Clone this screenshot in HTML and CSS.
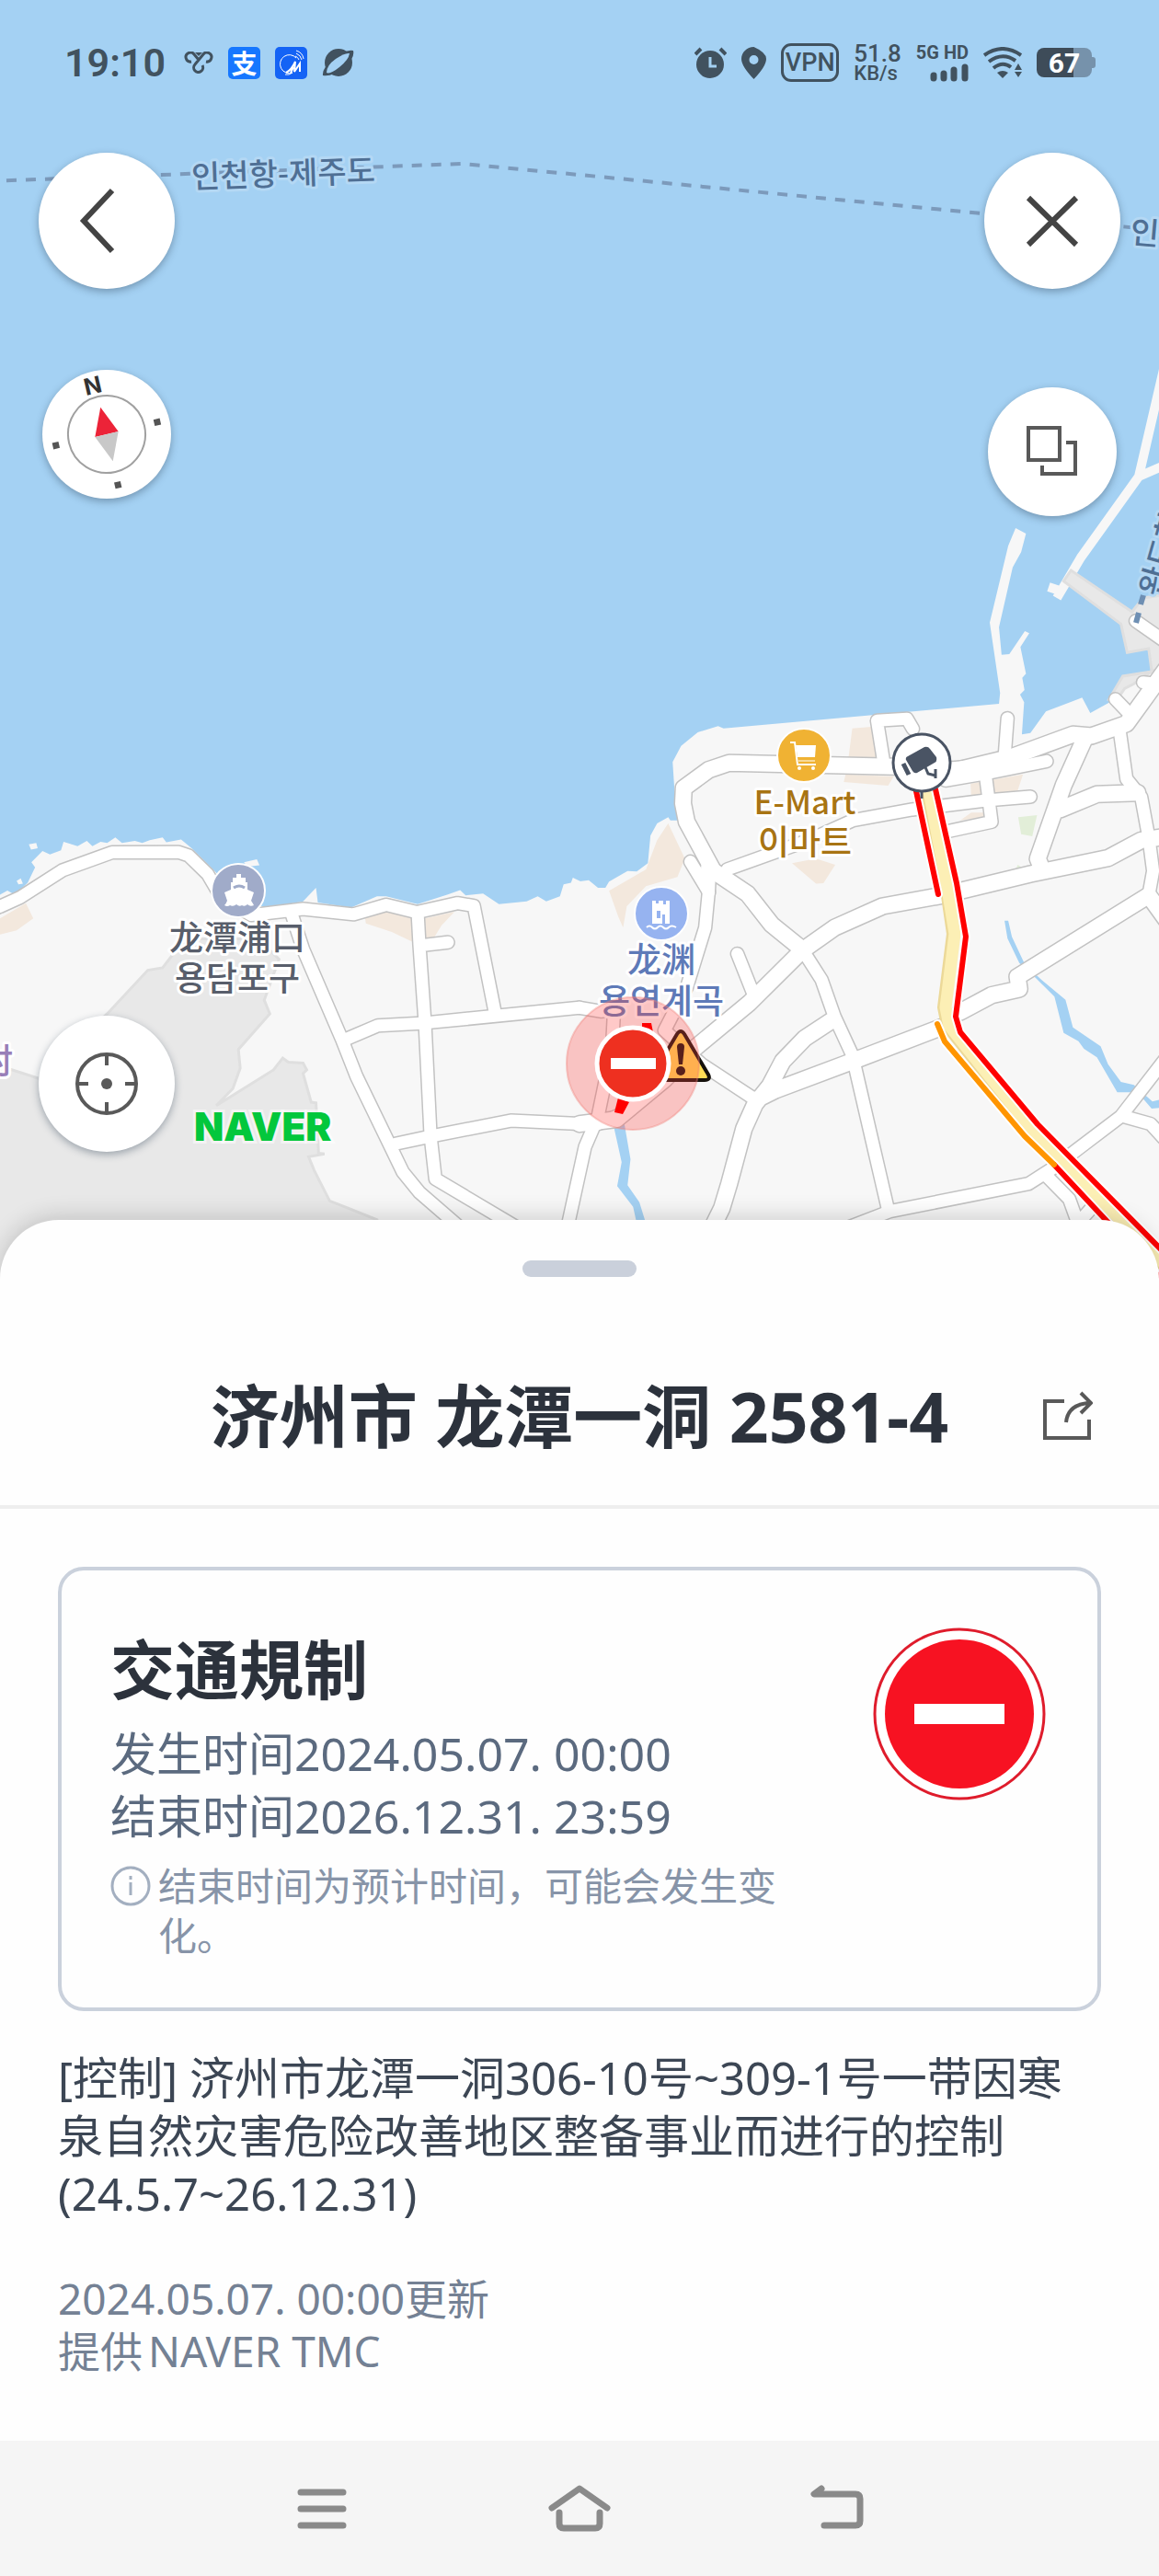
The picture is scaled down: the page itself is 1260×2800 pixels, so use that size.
FILE: index.html
```html
<!DOCTYPE html>
<html lang="zh-CN">
<head>
<meta charset="utf-8">
<meta name="viewport" content="width=device-width, initial-scale=1">
<title>济州市 龙潭一洞 2581-4</title>
<link rel="stylesheet" href="styles.css">
</head>
<body>
<main class="map">
  <svg class="map-canvas" viewBox="0 0 1260 1390" preserveAspectRatio="xMidYMin slice" aria-hidden="true">
    <defs>
      <g id="roads">
        <g transform="translate(0 780) scale(.4018 .37)">
          <path class="road" d="M-20 563L0 555L55 528L170 448L303 396L482 395L510 405L562 460L600 530L680 580L820 562L957 578L1045 550L1128 572L1238 545L1282 553L1340 870"/>
          <path class="road" d="M790 580L820 680L925 945L965 1055L1090 1335L1135 1395L1300 1550"/>
          <path class="road" d="M1130 572L1135 670L1150 900L1165 1230L1178 1355L1480 1550M1135 670L1212 660"/>
          <path class="road" d="M935 945L1022 905L1150 897L1568 852M1070 1252L1165 1230L1382 1184L1568 1193"/>
        </g>
        <g transform="translate(630 540) scale(.4018 .3333)">
          <path class="road wide" d="M1110 880L1010 890L850 880L405 868L350 890L282 950L280 1000L290 1060L360 1215"/>
          <path class="road wide" d="M1600 540L1480 740L1385 780L1335 775L1165 850L1010 895"/>
          <path class="road" d="M1264 862L1110 900L990 925M1505 405L1600 485M1525 605L1560 610M1450 660L1490 710"/>
          <path class="road wide" d="M1370 780L1310 940L1240 1180L1250 1210M1300 1020L1400 970L1510 965"/>
          <path class="road" d="M1158 722L1150 850M902 757L886 724L805 730L825 880"/>
          <path class="road" d="M1220 978L1100 990L900 1020L740 1055L620 1120L400 1215M1100 920L1115 1060L1000 1090M300 1190L350 1290"/>
          <path class="road" d="M1460 750L1480 920L1520 980L1540 1110L1552 1220L1540 1300"/>
        </g>
        <g transform="translate(630 940) scale(.4018 .3333)">
          <path class="road wide" d="M350 10L455 95L520 195L602 275"/>
          <path class="road" d="M602 275L655 375L690 495L738 620L835 1125"/>
          <path class="road" d="M352 30L350 80L340 205L290 400L230 540L330 650L475 765"/>
          <path class="road wide" d="M1600 -95L1520 -80L1430 -22L1220 30L980 100L820 135L690 205L602 280L460 450L310 600L230 700L100 830L0 845"/>
          <path class="road" d="M427 290L470 420M95 440L88 600L50 820M0 466L60 478"/>
          <path class="road wide" d="M1000 520L740 640L530 735L480 765M680 510L610 565L550 640L515 720L475 780L445 860L405 1040L385 1120L340 1230"/>
          <path class="road wide" d="M1030 480L1115 425L1190 405L1185 365L1540 100L1600 200"/>
          <path class="road" d="M700 1195L840 1130L1215 1040L1280 990L1345 930L1465 820L1600 610M1470 820L1545 845L1610 930M1260 1010L1325 1090L1370 1240M1400 1100L1340 1180M100 820L40 850L15 920L-45 1250"/>
        </g>
      </g>
      <g id="traffic">
        <path d="M996 860L1018 960L1020 974"/>
        <path class="jam" d="M1017 858L1040 960L1050 1018L1039 1105L1044 1122L1128 1222L1270 1366"/>
        <path class="jam" d="M996 860L1020 972M1146 1266L1260 1388"/>
        <path class="slow" d="M1019 1113L1027 1132L1114 1235L1146 1266"/>
      </g>
    </defs>

    <rect class="sea" x="-1000" width="3260" height="1390"/>
    <path class="ferry-route" d="M-14 197L502 178L630 190L1068 232L1260 250"/>
    <path class="pier" d="M1270 380L1238 518L1175 606L1149 650M1238 518L1270 504M1140 638L1152 642"/>

    <g class="land" transform="translate(0 780) scale(.4018 .37)">
      <path d="M0 520L20 508L40 520L75 485L95 440L85 425L115 392L135 402L165 390L172 365L210 378L235 362L250 378L272 365L290 368L312 352L330 368L365 362L385 368L405 360L440 352L450 366L490 358L520 385L580 450L640 520L720 560L820 540L855 500L860 543L950 558L1020 525L1045 525L1130 548L1210 520L1245 507L1260 522L1307 517L1350 548L1425 540L1455 525L1478 540L1515 525L1525 490L1545 485L1550 470L1572 482V1660H0ZM78 372L98 368L102 384L84 388ZM45 480L56 472L62 488L50 490ZM660 425L695 416L702 434L670 438Z"/>
    </g>
    <g class="land" transform="translate(630 540) scale(.4018 .3333)">
      <path d="M-4 1255L25 1250L50 1275L70 1275L80 1255L130 1220L155 1222L185 1195L192 1105L210 1065L240 1045L246 1055L270 1055L258 975L252 865L275 812L320 768L375 748L390 755L1135 675L1138 640L1110 410L1160 160L1180 102L1208 120L1195 180L1172 230L1135 425L1142 515L1163 513L1205 438L1217 445L1193 490L1208 577L1198 590L1204 630L1192 645L1203 670L1197 775L1220 770L1262 700L1360 655L1382 705L1435 670L1470 585L1548 567L1540 495L1482 508L1465 415L1310 275L1330 240L1498 378L1525 330L1580 318V2560H-4Z"/>
    </g>
    <g class="port" transform="translate(630 540) scale(.4018 .3333)">
      <path d="M1310 275L1330 240L1495 375L1525 330L1580 320V560L1548 567L1540 495L1482 508L1465 415ZM1433 660L1470 585L1548 570L1500 610L1475 625L1455 660Z"/>
    </g>
    <g class="port" transform="translate(0 780) scale(.4018 .37)">
      <path d="M-10 1020L105 1060L290 870L400 742L440 735L500 650L700 650L755 710L715 830L730 870L645 975L650 1030L630 1090L585 1140L740 1035L765 1000L780 1012L820 1015L830 1035L820 1045L842 1130L855 1132L862 1280L878 1282L835 1290L850 1330L892 1420L940 1440L1020 1475V1660H-10Z"/>
    </g>
    <g class="sand" transform="translate(0 780) scale(.4018 .37)">
      <path d="M0 590L70 545L90 590L45 625L0 637ZM988 590L1045 570L1115 590V658L1060 630L990 605ZM1150 590L1230 570L1195 610L1175 645L1150 648Z"/>
    </g>
    <g class="sand" transform="translate(630 540) scale(.4018 .3333)">
      <path d="M738 755L790 750L805 850H728ZM720 905L850 912L835 942L715 930ZM1058 935L1200 905L1185 960L1060 985ZM1030 1055L1060 1030H1100L1095 1045ZM240 1065L285 1180L265 1240L180 1270L128 1335L118 1405L105 1370L80 1285L180 1215L210 1120ZM575 1195L640 1180L692 1200L660 1260L640 1262Z"/>
      <path class="park" d="M1187 1045L1238 1038L1225 1107L1195 1100ZM1180 1215L1186 1200L1200 1212Z"/>
    </g>
    <g class="river" transform="translate(630 940) scale(.4018 .3333)">
      <path d="M1150 182H1160L1170 235L1205 325L1250 375L1315 440L1335 530L1410 592L1430 650L1465 708L1500 718L1550 772L1590 760V790L1548 795L1510 742L1455 742L1400 628L1365 600L1350 575L1310 548L1285 430L1235 370L1190 320L1158 240ZM92 850L120 835L138 960L130 1045L162 1100L180 1170H155L145 1115L102 1048L114 970Z"/>
    </g>

    <use href="#roads" class="road-edge"/>
    <use href="#roads" class="road-face"/>

    <path class="trunk-edge" d="M1008 860L1028 960L1036 1015L1026 1095L1030 1115L1124 1233L1270 1380"/>
    <path class="trunk" d="M1010 860L1029 960L1038 1015L1028 1095L1032 1115L1126 1233L1272 1380"/>
    <use href="#traffic" class="traffic-edge"/>
    <use href="#traffic" class="traffic-face"/>
    <path class="ferry-stub" d="M1235 677L1238 666M1240 657L1243 647"/>

    <g class="label route" font-size="34">
      <text x="308" y="201" text-anchor="middle" transform="rotate(-2 308 189)">인천항-제주도</text>
      <text x="1228" y="264" transform="rotate(5 1228 264)">인천항</text>
      <text x="1262" y="650" transform="rotate(-74 1262 650)">완도항</text>
    </g>
    <g class="label harbor" font-size="37" text-anchor="middle">
      <text x="258" y="1033">龙潭浦口</text>
      <text class="ko" x="258" y="1077">용담포구</text>
    </g>
    <g class="label shop" font-size="37" text-anchor="middle">
      <text class="latin" x="875" y="885">E-Mart</text>
      <text class="ko" x="875" y="929">이마트</text>
    </g>
    <g class="label sight" font-size="37" text-anchor="middle">
      <text x="719" y="1057">龙渊</text>
      <text class="ko" x="719" y="1102">용연계곡</text>
    </g>
    <text class="label village" font-size="37" text-anchor="end" x="14" y="1167">村</text>

    <g class="poi">
      <circle cx="259" cy="968" r="29" fill="#a0abc9"/>
      <path d="M257 950h5v4h5v5h2v8l7 3-3 9q2 3 3 5-4 2-7-1-3 3-6 1-3 2-6-1-4 3-7 1-3 2-6 0 2-2 3-5l-3-9 7-3v-8h2v-5h4z" fill="#fff"/>
      <path d="M254 965q6-4 12 0" fill="none" stroke="#a0abc9" stroke-width="3"/>
      <circle cx="874" cy="821" r="29" fill="#f0b233"/>
      <path d="M865 810h22l-1 13h-19z" fill="#fff"/>
      <path d="M859 807h5l3 24h20" fill="none" stroke="#fff" stroke-width="2"/>
      <path d="M867 827h19" stroke="#f7d998" stroke-width="2"/>
      <circle cx="869" cy="835" r="2" fill="#fff"/><circle cx="884" cy="835" r="2" fill="#fff"/>
      <circle cx="719" cy="993" r="29" fill="#96b3f0"/>
      <path fill-rule="evenodd" d="M709 979h4v3h3v-3h5v4h3v-4h4v25h-5v-10h-3v10h-11zM714 990h4v8h-4z" fill="#fff"/>
      <path d="M703 1008q3-3 6 0t6 0 6 0 6 0 8 0" fill="none" stroke="#fff" stroke-width="2"/>
    </g>

    <g class="camera">
      <path d="M1002 858v10" stroke="#4a5464" stroke-width="3"/>
      <circle cx="1002" cy="829" r="31" fill="#fff" stroke="#4a5464" stroke-width="3"/>
      <path d="M985 826q-1-3 2-4l18-10q4-1 6 2l7 9q1 5-2 6l-19 11q-3 1-5-2z" fill="#4a5464"/>
      <path d="M982 830l6 12" fill="none" stroke="#4a5464" stroke-width="5"/>
      <path d="M1006 834l3 7 8 2M1017 836v10" fill="none" stroke="#4a5464" stroke-width="3"/>
    </g>

    <g class="incident">
      <path d="M736 1124q4-6 8 0l26 44q3 6-4 6h-52q-7 0-4-6z" fill="#ffdc55" stroke="#15110c" stroke-width="4"/>
      <path d="M736 1138q0-4 4-4t4 4l-2 19h-4z" fill="#15110c"/><circle cx="740" cy="1164" r="5" fill="#15110c"/>
      <circle cx="688" cy="1156" r="72" fill="#ff4440" fill-opacity=".29" stroke="#f08078" stroke-opacity=".4" stroke-width="2"/>
      <path d="M698 1112h10l2 10h-12zM672 1193l12 5-7 13-9-2z" fill="#f00"/>
      <circle cx="688" cy="1156" r="39" fill="#ee3020" stroke="#fff" stroke-width="5"/>
      <path d="M664 1150h49v12h-49z" fill="#fff"/>
    </g>
    <text class="brand" x="211" y="1240">NAVER</text>
  </svg>

  <header class="status">
    <div class="status-group">
      <time class="clock">19:10</time>
      <svg width="32" height="24" viewBox="0 0 32 24" fill="none" stroke="#41525f" stroke-width="3"><path d="M8 11A5 5 0 1 1 11 3l5 6M24 11A5 5 0 1 0 21 3l-9 11A5 5 0 1 0 20 15"/><path d="M12 1h8l-4 4z" fill="#41525f" stroke="none"/></svg>
      <span class="app-badge">支</span>
      <svg width="35" height="35" viewBox="0 0 35 35"><rect width="35" height="35" rx="5" fill="#1463f5"/><path d="M23 12A10 10 0 1 0 19 28M19 28q-4 3-8 2" fill="none" stroke="#fff" stroke-width="1"/><path d="M12 28q6-3 10-12l-1 11 6-9v9M17 28l3-6" fill="none" stroke="#fff" stroke-width="2"/><path d="M22 10q3 1 4 4M23 7q5 2 6 7M23 4q7 2 8 9" fill="none" stroke="#fff"/></svg>
      <svg width="35" height="35" viewBox="0 0 35 35"><circle cx="18" cy="17" r="15" fill="#41525f"/><path d="M1 31q-1-8 10-16Q25 2 34 4q2 8-9 17Q11 33 1 31" fill="#41525f"/><path d="M5 28Q5 20 15 13T30 7q-1 7-11 15T5 28" fill="#a4d1f3"/></svg>
    </div>
    <div class="status-group">
      <svg width="35" height="35" viewBox="0 0 35 35"><circle cx="17" cy="19" r="15" fill="#41525f"/><path d="M1 8l6-6M34 8l-6-6" stroke="#41525f" stroke-width="4"/><path d="M17 11v10h7" fill="none" stroke="#a4d1f3" stroke-width="3"/></svg>
      <svg width="27" height="35" viewBox="0 0 27 35"><path fill-rule="evenodd" d="M13.500 0C6 0 0 6 0 13q0 8 13.500 22Q27 21 27 13 27 6 13.500 0m0 9a5 5 0 1 1 0 10 5 5 0 0 1 0-10" fill="#41525f"/></svg>
      <span class="vpn">VPN</span>
      <span class="speed"><b>51.8</b><span>KB/s</span></span>
      <span class="signal">
        <span>5G HD</span>
        <svg width="42" height="20" viewBox="0 0 42 20"><path d="M4 13v3M15 11v5M26 7v9M38 4v12" stroke="#41525f" stroke-width="7" stroke-linecap="round"/></svg>
      </span>
      <svg width="42" height="34" viewBox="0 0 42 34" fill="none" stroke="#41525f" stroke-width="4"><path d="M1 9q20-14 40 0M6 16q15-11 29-1M11 23q10-8 19-1"/><path d="M15 28q6-4 12 0l-6 6z" fill="#41525f" stroke="none"/><path d="M34 25l4-7 4 7zM34 27h8l-4 6z" fill="#41525f" stroke="none"/></svg>
      <span class="battery">67</span>
    </div>
  </header>

  <div class="controls left">
    <button class="round" aria-label="返回"><svg width="148" height="148" viewBox="0 0 148 148"><path d="M80 41L49 74l31 33" fill="none" stroke="#444" stroke-width="6"/></svg></button>
    <button class="round small compass" aria-label="指南针"><svg width="140" height="140" viewBox="-70 -70 140 140"><g transform="rotate(-13)"><circle r="42" fill="none" stroke="#a0a0a0" stroke-width="2"/><path d="M0-30L13 0H-13z" fill="#ec2338"/><path d="M0 30L13 0H-13z" fill="#c8c8c8"/><path d="M53-4h7v7h-7zM-60-4h7v7h-7zM-4 53h7v7h-7z" fill="#555"/><text x="-3" y="-46" text-anchor="middle">N</text></g></svg></button>
    <button class="round locate" aria-label="我的位置"><svg width="148" height="148" viewBox="0 0 148 148" fill="none" stroke="#595959" stroke-width="4"><circle cx="74" cy="74" r="32"/><path d="M74 42v12M74 94v12M42 74h12M94 74h12"/><circle cx="74" cy="74" r="6" fill="#595959" stroke="none"/></svg></button>
  </div>
  <div class="controls right">
    <button class="round" aria-label="关闭"><svg width="148" height="148" viewBox="0 0 148 148"><path d="M48 49l52 51M100 49L48 100" fill="none" stroke="#444" stroke-width="6"/></svg></button>
    <button class="round small layers" aria-label="地图图层"><svg width="140" height="140" viewBox="0 0 140 140" fill="none" stroke="#595959" stroke-width="4"><path d="M44 44h34v35H44zM85 60h10v34H59V85"/></svg></button>
  </div>
</main>

<section class="sheet">
  <div class="handle"></div>
  <header class="sheet-head">
    <h1>济州市 龙潭一洞 2581-4</h1>
    <button class="share" aria-label="分享"><svg width="54" height="54" viewBox="0 0 54 54" fill="none" stroke="#595959" stroke-width="4"><path d="M23 11H2v40h48V31"/><path d="M25 34Q27 14 51 13M41 2l11 11-11 11"/></svg></button>
  </header>
  <div class="content">
    <article class="card">
      <div class="card-text">
        <h2>交通規制</h2>
        <p class="when">发生时间<time>2024.05.07. 00:00</time></p>
        <p class="when">结束时间<time>2026.12.31. 23:59</time></p>
        <div class="note">
          <svg width="44" height="44" viewBox="0 0 44 44" fill="none" stroke="#a3afc0" stroke-width="3"><circle cx="22" cy="22" r="20"/><path d="M22 18v14M22 11v4"/></svg>
          <p>结束时间为预计时间，可能会发生变化。</p>
        </div>
      </div>
      <svg class="sign" width="188" height="188" viewBox="0 0 188 188" role="img" aria-label="禁止通行"><circle cx="94" cy="94" r="92" fill="#fff" stroke="#df1c2c" stroke-width="3"/><circle cx="94" cy="94" r="81" fill="#f71222"/><path d="M45 83h98v22H45z" fill="#fff"/></svg>
    </article>
    <p class="detail">[控制] 济州市龙潭一洞306-10号~309-1号一带因寒泉自然灾害危险改善地区整备事业而进行的控制(24.5.7~26.12.31)</p>
    <footer class="source">
      <p>2024.05.07. 00:00更新</p>
      <p class="provider"><span>提供</span><span>NAVER TMC</span></p>
    </footer>
  </div>
</section>

<nav class="system-nav">
  <button aria-label="最近任务"><svg width="68" height="56" viewBox="0 0 68 56"><path d="M11 10h46M11 28h46M11 46h46"/></svg></button>
  <button aria-label="主页"><svg width="68" height="56" viewBox="0 0 68 56"><path d="M4 27L34 6l30 21M12 32v12q0 5 5 5h34q5 0 5-5V32"/></svg></button>
  <button aria-label="返回"><svg width="68" height="56" viewBox="0 0 68 56"><path d="M17 6L9 12h45q5 0 5 5v24q0 5-5 5H20"/></svg></button>
</nav>
</body>
</html>
```

FILE: styles.css
```css
* { box-sizing: border-box; }
body {
  margin: 0;
  min-height: 100vh;
  display: flex;
  flex-direction: column;
  background: #fefefe;
  color: #2c323c;
  font-family: "Noto Sans", "Noto Sans CJK SC", sans-serif;
}
h1, h2, p { margin: 0; }
button {
  padding: 0;
  border: 0;
  background: none;
  color: inherit;
  font: inherit;
}
svg { display: block; flex: none; }

/* Map */
.map {
  position: relative;
  height: 1390px;
  overflow: hidden;
  background: #a4d1f3;
}
.map-canvas { position: absolute; inset: 0; width: 100%; height: 100%; }
.map-canvas path { vector-effect: non-scaling-stroke; }
.sea, .river { fill: #a4d1f3; }
.land { fill: #f7f7f7; }
.pier { fill: none; stroke: #f7f7f7; stroke-width: 10px; stroke-linejoin: round; }
.port { fill: #e8e8e8; stroke: #dfdfdf; stroke-width: 3px; }
.sand { fill: #f3e8dd; }
.park { fill: #e2eed8; }
.ferry-route { fill: none; stroke: #7c9abb; stroke-width: 4px; stroke-dasharray: 11 10; }
.ferry-stub { stroke: #6e8fb3; stroke-width: 6px; }
.road {
  fill: none;
  stroke-linecap: round;
  stroke-linejoin: round;
  stroke-width: calc(13px + var(--edge, 0px));
}
.road.wide { stroke-width: calc(17px + var(--edge, 0px)); }
.road-edge { --edge: 3px; stroke: #c2c2c2; }
.road-face { stroke: #fff; }
.trunk, .trunk-edge { fill: none; stroke-linejoin: round; }
.trunk { stroke: #fcefb5; stroke-width: 13px; }
.trunk-edge { stroke: #ecd998; stroke-width: 14px; }
#traffic path { fill: none; stroke-linecap: round; stroke-linejoin: round; stroke-width: var(--flow); }
#traffic .jam { stroke: var(--tone, #f00); }
#traffic .slow { stroke: var(--tone, #ff9500); }
.traffic-edge { --flow: 10px; --tone: #fff; }
.traffic-face { --flow: 6px; }

.label {
  font-family: "Noto Sans CJK SC", sans-serif;
  font-weight: 500;
  stroke: #fff;
  stroke-width: 6px;
  stroke-linejoin: round;
  paint-order: stroke;
}
.label.route, .ko { font-family: "Noto Sans CJK KR", sans-serif; }
.latin { font-size: 35px; }
.route { fill: #4f6f94; stroke: #b4d8f4; }
.harbor { fill: #585e6b; }
.shop { fill: #a87413; }
.sight { fill: #5e7ab8; }
.village { fill: #987fb8; }
.poi circle[r="29"] { stroke: #fff; stroke-width: 2px; }
.brand {
  font: 900 42px "Inter", sans-serif;
  fill: #03c73c;
  stroke: #fff;
  stroke-opacity: .5;
  stroke-width: 6px;
  paint-order: stroke;
}

/* Status bar */
.status {
  position: relative;
  display: flex;
  align-items: center;
  justify-content: space-between;
  height: 136px;
  padding: 0 70px;
  color: #41525f;
  font-family: "Roboto", sans-serif;
}
.status-group { display: flex; align-items: center; gap: 16px; }
.clock { margin-right: 4px; font-size: 43px; font-weight: 600; line-height: 48px; }
.app-badge {
  width: 35px;
  height: 35px;
  border-radius: 5px;
  background: #1677ff;
  color: #fff;
  font: 700 28px/34px "Noto Sans CJK SC", sans-serif;
  text-align: center;
}
.vpn {
  width: 63px;
  height: 42px;
  border: 3px solid;
  border-radius: 11px;
  font-size: 27px;
  font-weight: 500;
  line-height: 36px;
  text-align: center;
}
.speed { display: flex; flex-direction: column; font-size: 22px; font-weight: 500; line-height: 20px; }
.speed b { font-size: 26px; font-weight: 500; line-height: 24px; }
.signal {
  display: flex;
  flex-direction: column;
  align-items: flex-end;
  gap: 2px;
  font-size: 20px;
  font-weight: 700;
  line-height: 20px;
}
.battery {
  position: relative;
  width: 60px;
  height: 32px;
  margin-right: 3px;
  border-radius: 8px;
  background: linear-gradient(90deg, #3e4c59 67%, #7692ab 67%);
  color: #fff;
  font-size: 30px;
  font-weight: 700;
  line-height: 34px;
  text-align: center;
}
.battery::after {
  content: "";
  position: absolute;
  top: 10px;
  right: -4px;
  width: 4px;
  height: 12px;
  border-radius: 0 3px 3px 0;
  background: #7692ab;
}

/* Floating map buttons */
.controls {
  position: absolute;
  top: 166px;
  bottom: 138px;
  display: flex;
  flex-direction: column;
  align-items: center;
}
.controls.left { left: 42px; }
.controls.right { right: 42px; }
.round {
  width: 148px;
  height: 148px;
  border-radius: 50%;
  background: #fff;
  box-shadow: 0 3px 8px rgba(40, 60, 80, .4);
}
.round.small { width: 140px; height: 140px; }
.compass { margin-top: 88px; }
.compass text { font: 700 25px "Inter", sans-serif; fill: #333; }
.locate { margin-top: auto; }
.layers { margin-top: 107px; }

/* Bottom sheet */
.sheet {
  position: relative;
  flex: 1;
  margin-top: -64px;
  padding-top: 44px;
  border-radius: 64px 64px 0 0;
  background: #fefefe;
  box-shadow: 0 -4px 24px rgba(0, 0, 0, .16);
}
.handle {
  width: 124px;
  height: 18px;
  margin: 0 auto 54px;
  border-radius: 9px;
  background: #cad0db;
}
.sheet-head {
  display: grid;
  grid-template-columns: 54px 1fr 54px;
  align-items: center;
  height: 198px;
  padding: 0 72px;
  border-bottom: 4px solid #eee;
}
.sheet-head h1 {
  grid-column: 2;
  font-size: 75px;
  font-weight: 700;
  line-height: 96px;
  text-align: center;
}
.content { padding: 63px; }
.card {
  display: flex;
  justify-content: space-between;
  align-items: flex-start;
  gap: 24px;
  padding: 62px 56px 51px 53px;
  border: 4px solid #cad1dc;
  border-radius: 28px;
}
.card h2 { margin: 4px 0 15px; font-size: 70px; font-weight: 700; line-height: 84px; }
.when { color: #5b6a7f; font-size: 50px; line-height: 68px; }
.note { display: flex; gap: 8px; max-width: 730px; margin-top: 15px; color: #8794a8; font-size: 42px; line-height: 54px; }
.note svg { margin-top: 5px; }
.detail { margin-top: 41px; color: #3c4654; font-size: 49px; line-height: 63px; }
.source { margin-top: 54px; color: #748194; font-size: 46px; line-height: 57px; }
.provider { display: flex; gap: 6px; }

/* System navigation */
.system-nav {
  position: relative;
  display: grid;
  grid-template-columns: repeat(3, 280px);
  justify-content: center;
  height: 147px;
  background: #f5f5f5;
}
.system-nav button { display: grid; place-items: center; }
.system-nav path { fill: none; stroke: #8a8a8a; stroke-width: 7px; stroke-linecap: round; stroke-linejoin: round; }
```
